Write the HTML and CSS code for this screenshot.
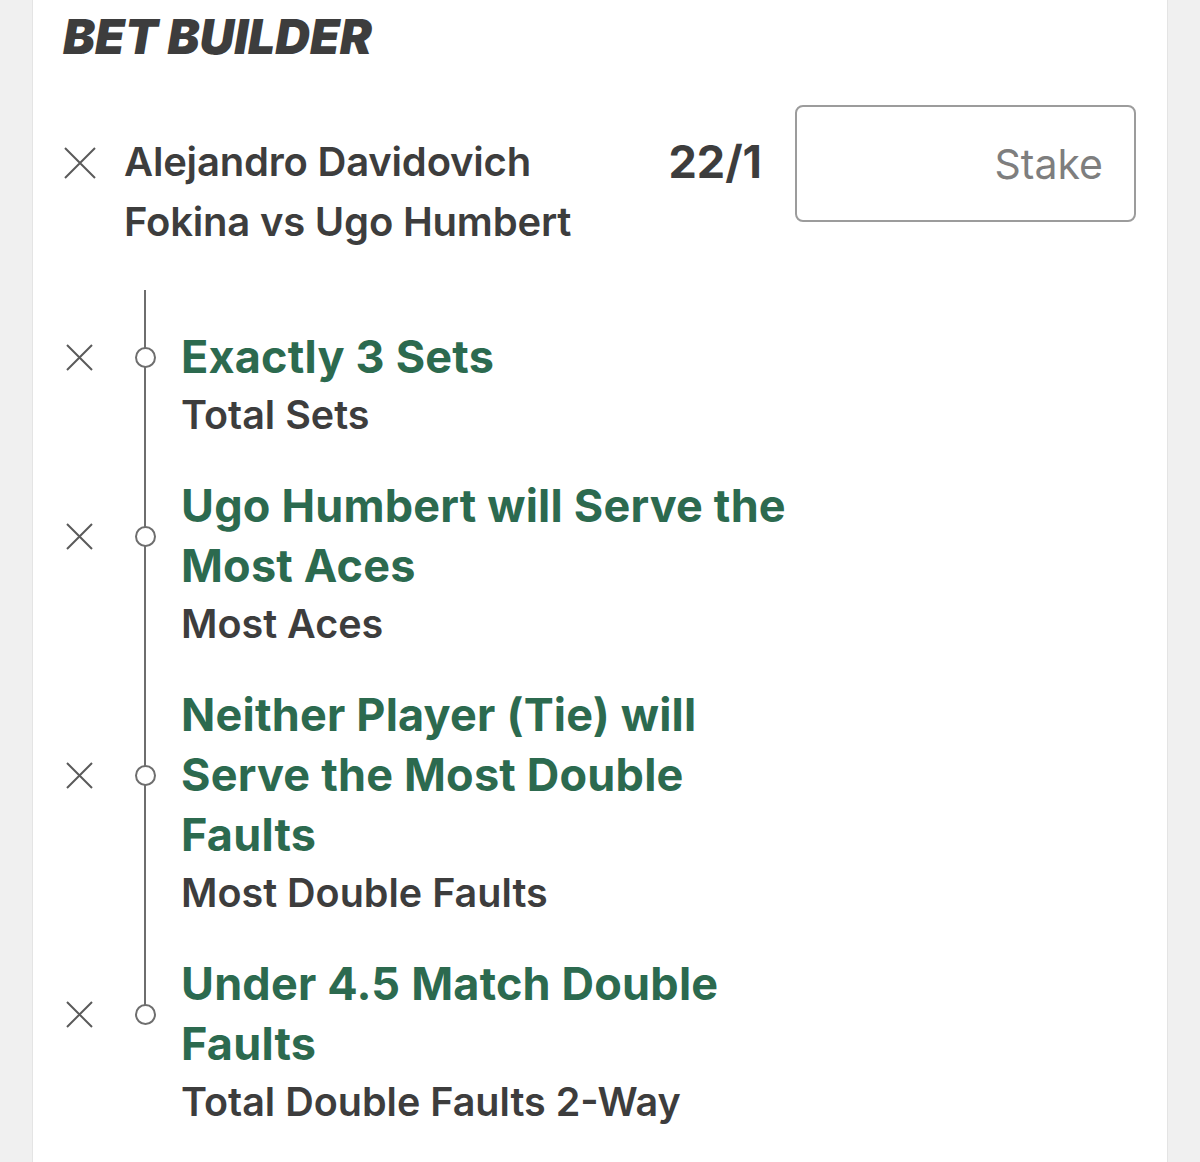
FILE: index.html
```html
<!DOCTYPE html>
<html lang="en">
<head>
  <meta charset="UTF-8">
  <title>Bet Builder</title>
  <meta name="viewport" content="width=device-width, initial-scale=1.0" />
  <link rel="stylesheet" href="styles.css">
</head>
<body>
<div class="slip">
  <h1 class="slip-title">BET BUILDER</h1>

  <div class="bet-head">
    <button class="remove remove-lg" aria-label="Remove">
      <svg viewBox="0 0 32 32" width="32" height="32"><path d="M1 1 L31 31 M31 1 L1 31" /></svg>
    </button>
    <div class="event">Alejandro Davidovich Fokina vs Ugo Humbert</div>
    <div class="odds">22/1</div>
    <input class="stake" type="text" placeholder="Stake">
  </div>

  <div class="legs">
    <div class="leg">
      <div class="leg-row">
        <button class="remove" aria-label="Remove">
          <svg viewBox="0 0 27 27" width="27" height="27"><path d="M1 1 L26 26 M26 1 L1 26" /></svg>
        </button>
        <span class="dot"></span>
        <div class="leg-name">Exactly 3 Sets</div>
      </div>
      <div class="leg-market">Total Sets</div>
    </div>

    <div class="leg">
      <div class="leg-row">
        <button class="remove" aria-label="Remove">
          <svg viewBox="0 0 27 27" width="27" height="27"><path d="M1 1 L26 26 M26 1 L1 26" /></svg>
        </button>
        <span class="dot"></span>
        <div class="leg-name">Ugo Humbert will Serve the Most Aces</div>
      </div>
      <div class="leg-market">Most Aces</div>
    </div>

    <div class="leg">
      <div class="leg-row">
        <button class="remove" aria-label="Remove">
          <svg viewBox="0 0 27 27" width="27" height="27"><path d="M1 1 L26 26 M26 1 L1 26" /></svg>
        </button>
        <span class="dot"></span>
        <div class="leg-name">Neither Player (Tie) will Serve the Most Double Faults</div>
      </div>
      <div class="leg-market">Most Double Faults</div>
    </div>

    <div class="leg">
      <div class="leg-row">
        <button class="remove" aria-label="Remove">
          <svg viewBox="0 0 27 27" width="27" height="27"><path d="M1 1 L26 26 M26 1 L1 26" /></svg>
        </button>
        <span class="dot"></span>
        <div class="leg-name">Under 4.5 Match Double Faults</div>
      </div>
      <div class="leg-market">Total Double Faults 2-Way</div>
    </div>
  </div>
</div>
</body>
</html>
```

FILE: styles.css
```css
body {
  margin: 0;
  background-color: #f0f0f0;
  font-family: 'Inter', 'Noto Sans', sans-serif;
  color: #3d3d3d;
}

.slip {
  margin: 0 32px;
  min-height: 100vh;
  box-sizing: border-box;
  background-color: #fff;
  border-left: 1px solid #e4e4e4;
  border-right: 1px solid #e4e4e4;
  padding: 0 31px 0 30px;
}

.slip-title {
  margin: 0;
  padding-top: 7px;
  font-size: 48px;
  line-height: 60px;
  font-weight: 900;
  font-style: italic;
  letter-spacing: 0;
  color: #3d3d3d;
}

/* cabeçalho da aposta */
.bet-head {
  display: flex;
  align-items: flex-start;
  margin-top: 38px;
  margin-bottom: 38px;
}

.remove {
  border: none;
  background: none;
  padding: 0;
  cursor: pointer;
  display: flex;
}

.remove svg {
  stroke: #5a5a5a;
  stroke-width: 2;
  fill: none;
}

.remove-lg {
  margin: 42px 0 0 1px;
}

.event {
  flex: 1;
  margin: 27px 0 0 28px;
  font-size: 40px;
  line-height: 60px;
  font-weight: 600;
  letter-spacing: -0.2px;
  color: #3d3d3d;
}

.odds {
  margin: 27px 0 0 60px;
  font-size: 45px;
  line-height: 60px;
  font-weight: 700;
  color: #3d3d3d;
}

.stake {
  margin-left: 33px;
  width: 341px;
  height: 117px;
  box-sizing: border-box;
  border: 2px solid #9c9c9c;
  border-radius: 8px;
  padding: 0 31px 0 16px;
  text-align: right;
  font-family: inherit;
  font-size: 41px;
  color: #3d3d3d;
}

.stake::placeholder {
  color: #7e7e7e;
}

/* pernas da aposta */
.leg {
  padding-bottom: 33px;
  background: linear-gradient(#6e6e6e, #6e6e6e) no-repeat 81px 0 / 2px 100%;
}

.leg:first-child {
  padding-top: 37px;
}

.leg:last-child {
  padding-bottom: 40px;
  background-size: 2px 60px;
}

.leg-row {
  display: flex;
  align-items: center;
}

.leg-row .remove {
  width: 64px;
  padding-left: 3px;
  box-sizing: border-box;
}

.dot {
  flex: none;
  width: 21px;
  height: 21px;
  margin: 0 7.5px;
  box-sizing: border-box;
  border: 2px solid #6e6e6e;
  border-radius: 50%;
  background-color: #fff;
}

.leg-name {
  margin-left: 18px;
  max-width: 620px;
  font-size: 45px;
  line-height: 60px;
  font-weight: 700;
  letter-spacing: 0.2px;
  color: #2c6a4f;
}

.leg-market {
  padding-left: 118px;
  font-size: 39.5px;
  line-height: 56px;
  font-weight: 600;
  color: #3d3d3d;
}
```
